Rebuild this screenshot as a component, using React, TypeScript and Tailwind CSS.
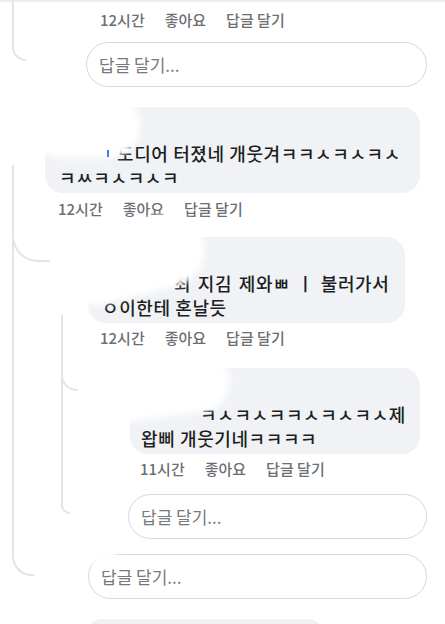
import React from "react";

const FONT = "font-['Noto_Sans_CJK_KR','Noto_Sans',sans-serif]";

function Meta({ time, className }: { time: string; className: string }) {
  return (
    <div className={`flex h-[20px] items-center gap-[20px] text-[15px] font-medium leading-[20px] text-[#6b6e73] ${className}`}>
      <span>{time}</span>
      <span>좋아요</span>
      <span>답글 달기</span>
    </div>
  );
}

function ReplyInput({ className }: { className: string }) {
  return (
    <div
      className={`flex h-[45px] items-center rounded-full border border-[#d6d8dc] bg-white pl-[12px] text-[17px] text-[#76797e] ${className}`}
    >
      답글 달기...
    </div>
  );
}

function Bubble({ className, children }: { className: string; children: React.ReactNode }) {
  return (
    <div className={`rounded-[18px] bg-[#f0f2f5] pb-[4px] pl-[14px] pr-[12px] pt-[8px] ${className}`}>
      <div className="h-[26px]" />
      <div className="whitespace-nowrap text-[18px] font-medium leading-[24px] tracking-[0.6px] text-[#1c1e21]">
        {children}
      </div>
    </div>
  );
}

export default function App() {
  return (
    <div className={`relative h-[624px] w-[445px] overflow-hidden bg-white ${FONT}`}>
      {/* top faint band */}
      <div className="absolute left-0 right-0 top-0 h-[3px] bg-gradient-to-b from-[#e6e6e6] to-white" />

      {/* thread lines */}
      <div className="absolute left-[12px] top-[-10px] h-[71px] w-[14px] rounded-bl-[16px] border-b-2 border-l-2 border-[#e2e4e7]" />
      <div className="absolute left-[12px] top-[165px] h-[411px] w-[22px] rounded-bl-[20px] border-b-2 border-l-2 border-[#e2e4e7]" />
      <div className="absolute left-[12px] top-[212px] h-[50px] w-[38px] rounded-bl-[26px] border-b-2 border-l-2 border-[#e2e4e7]" />
      <div className="absolute left-[61px] top-[315px] h-[199px] w-[9px] rounded-bl-[12px] border-b-2 border-l-2 border-[#e2e4e7]" />
      <div className="absolute left-[61px] top-[350px] h-[41px] w-[17px] rounded-bl-[16px] border-b-2 border-l-2 border-[#e2e4e7]" />

      <div className="relative flex flex-col">
        <Meta time="12시간" className="ml-[100px] mt-[10px]" />
        <ReplyInput className="ml-[86px] mr-[18px] mt-[12px]" />

        <Bubble className="ml-[45px] mr-[25px] mt-[20px]">
          <div>
            <span className="inline-block w-[58px]" />
            도디어 터졌네 개웃겨ㅋㅋㅅㅋㅅㅋㅅ
          </div>
          <div>ㅋㅆㅋㅅㅋㅅㅋ</div>
        </Bubble>
        <Meta time="12시간" className="ml-[58px] mt-[6px]" />

        <Bubble className="ml-[88px] mr-[40px] mt-[18px]">
          <div className="[word-spacing:2px]">
            <span className="inline-block w-[72px]" />
            최 지김 제와ㅃ ㅣ 불러가서
          </div>
          <div>ㅇ이한테 혼날듯</div>
        </Bubble>
        <Meta time="12시간" className="ml-[100px] mt-[5px]" />

        <Bubble className="ml-[130px] mr-[25px] mt-[20px]">
          <div className="pr-[2px] text-right">ㅋㅅㅋㅅㅋㅋㅅㅋㅅㅋㅅ제</div>
          <div className="-ml-[3px]">왑삐 개웃기네ㅋㅋㅋㅋ</div>
        </Bubble>
        <Meta time="11시간" className="ml-[140px] mt-[5px]" />

        <ReplyInput className="ml-[128px] mr-[18px] mt-[15px]" />
        <ReplyInput className="ml-[88px] mr-[18px] mt-[15px]" />

        <div className="ml-[85px] mt-[20px] h-[40px] w-[240px] rounded-[18px] bg-[#f0f2f5]" />
      </div>

      {/* redaction blobs over content */}
      <div className="absolute left-[28px] top-[94px] h-[64px] w-[112px] rounded-full bg-white blur-[3px]" />
      <div className="absolute left-[107px] top-[150px] h-[7px] w-[2px] bg-[#3b82f6]" />
      <div className="absolute left-[56px] top-[224px] h-[72px] w-[150px] -rotate-[14deg] rounded-full bg-white blur-[3px]" />
      <div className="absolute left-[80px] top-[358px] h-[60px] w-[150px] -rotate-[8deg] rounded-full bg-white blur-[3px]" />
      <div className="absolute left-[68px] top-[516px] h-[46px] w-[54px] rounded-full bg-white blur-[3px]" />
    </div>
  );
}
